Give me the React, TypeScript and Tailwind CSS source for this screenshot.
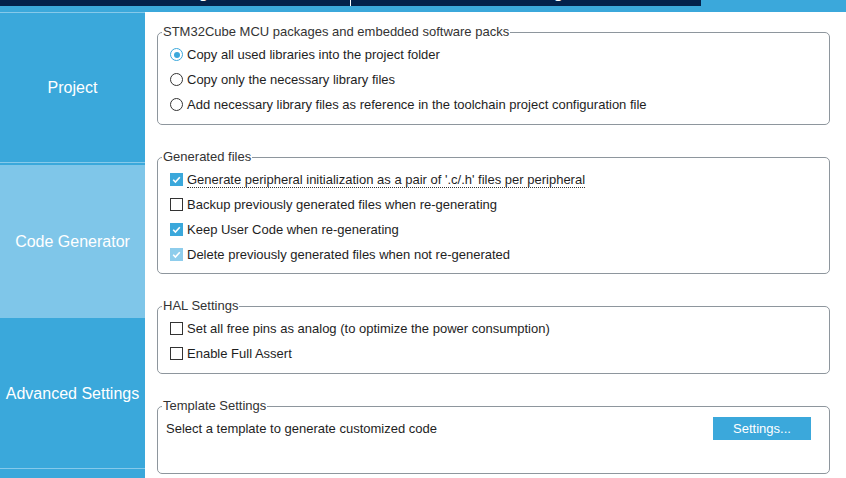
import React from "react";

const Radio = ({ checked }: { checked?: boolean }) =>
  checked ? (
    <span className="w-[13px] h-[13px] shrink-0 rounded-full border-[1.5px] border-[#3ba8db] bg-white flex items-center justify-center">
      <span className="w-[6px] h-[6px] rounded-full bg-[#3ba8db]" />
    </span>
  ) : (
    <span className="w-[13px] h-[13px] shrink-0 rounded-full border border-[#333] bg-white" />
  );

const Check = ({ checked, disabled }: { checked?: boolean; disabled?: boolean }) =>
  checked ? (
    <span
      className={
        "w-[13px] h-[13px] shrink-0 flex items-center justify-center " +
        (disabled ? "bg-[#8ecdec]" : "bg-[#3ba8db]")
      }
    >
      <svg width="13" height="13" viewBox="0 0 13 13">
        <path d="M3.2 6.8 L5.4 9 L9.8 4.2" fill="none" stroke="white" strokeWidth="1.6" />
      </svg>
    </span>
  ) : (
    <span className="w-[13px] h-[13px] shrink-0 border border-[#333] bg-white" />
  );

const Row = ({ children }: { children: React.ReactNode }) => (
  <div className="flex items-center h-[25px] gap-[4px]">{children}</div>
);

const Legend = ({ children }: { children: React.ReactNode }) => (
  <legend className="ml-[4px] px-[1px] leading-[14px] text-[13px] text-[#333]">{children}</legend>
);

export default function App() {
  return (
    <div className="w-[846px] h-[478px] overflow-hidden bg-white font-['Liberation_Sans',Arial,sans-serif] text-[13px] text-[#1e1e1e]">
      {/* top tab bar */}
      <div className="h-[12px] bg-[#3ba8db]">
        <div className="flex h-[6px] overflow-hidden">
          <div className="w-[350px] bg-[#03214b] flex items-start justify-center overflow-hidden">
            <span className="mt-[-15px] text-[16px] leading-[16px] font-bold text-white whitespace-nowrap">
              Pinout &amp; Configuration
            </span>
          </div>
          <div className="w-[1px] bg-white" />
          <div className="w-[350px] bg-[#03214b] flex items-start justify-center overflow-hidden">
            <span className="mt-[-15px] ml-[30px] text-[16px] leading-[16px] font-bold text-white whitespace-nowrap">
              Clock Configuration
            </span>
          </div>
          <div className="flex-1 bg-[#3ba8db]" />
        </div>
      </div>

      <div className="flex h-[466px]">
        {/* sidebar */}
        <div className="w-[145px] shrink-0 bg-[#3aa8db] flex flex-col text-white text-[16px]">
          <div className="h-[1px] bg-[#86c9ea]" />
          <div className="h-[149px] pt-[1px] flex items-center justify-center">Project</div>
          <div className="h-[1px] bg-[#86c9ea]" />
          <div className="h-[2px]" />
          <div className="h-[153px] bg-[#7fc6e9] flex items-center justify-center">Code Generator</div>
          <div className="h-[150px] pt-[2px] flex items-center justify-center">Advanced Settings</div>
          <div className="h-[1px] bg-[#86c9ea]" />
        </div>

        {/* main */}
        <div className="flex-1 pl-[12px] pr-[16px] flex flex-col">
          <fieldset className="mt-[13px] border border-[#8e969d] rounded-[5px]">
            <Legend>STM32Cube MCU packages and embedded software packs</Legend>
            <div className="pl-[12px] pt-[3px] pb-[7px]">
              <Row>
                <Radio checked />
                <span>Copy all used libraries into the project folder</span>
              </Row>
              <Row>
                <Radio />
                <span>Copy only the necessary library files</span>
              </Row>
              <Row>
                <Radio />
                <span>Add necessary library files as reference in the toolchain project configuration file</span>
              </Row>
            </div>
          </fieldset>

          <fieldset className="mt-[25px] border border-[#8e969d] rounded-[5px]">
            <Legend>Generated files</Legend>
            <div className="pl-[12px] pt-[3px] pb-[6px]">
              <Row>
                <Check checked />
                <span className="inline-block leading-[15px] pt-[1px] border-b border-dotted border-[#333]">
                  Generate peripheral initialization as a pair of '.c/.h' files per peripheral
                </span>
              </Row>
              <Row>
                <Check />
                <span>Backup previously generated files when re-generating</span>
              </Row>
              <Row>
                <Check checked />
                <span>Keep User Code when re-generating</span>
              </Row>
              <Row>
                <Check checked disabled />
                <span>Delete previously generated files when not re-generated</span>
              </Row>
            </div>
          </fieldset>

          <fieldset className="mt-[25px] border border-[#8e969d] rounded-[5px]">
            <Legend>HAL Settings</Legend>
            <div className="pl-[12px] pt-[3px] pb-[7px]">
              <Row>
                <Check />
                <span>Set all free pins as analog (to optimize the power consumption)</span>
              </Row>
              <Row>
                <Check />
                <span>Enable Full Assert</span>
              </Row>
            </div>
          </fieldset>

          <fieldset className="mt-[25px] h-[75px] border border-[#8e969d] rounded-[5px]">
            <Legend>Template Settings</Legend>
            <div className="pl-[8px] pr-[18px] pt-[4px] flex items-center justify-between h-[27px]">
              <span>Select a template to generate customized code</span>
              <button className="w-[98px] h-[23px] bg-[#3ba8db] text-white text-[13px]">Settings...</button>
            </div>
          </fieldset>
        </div>
      </div>
    </div>
  );
}
